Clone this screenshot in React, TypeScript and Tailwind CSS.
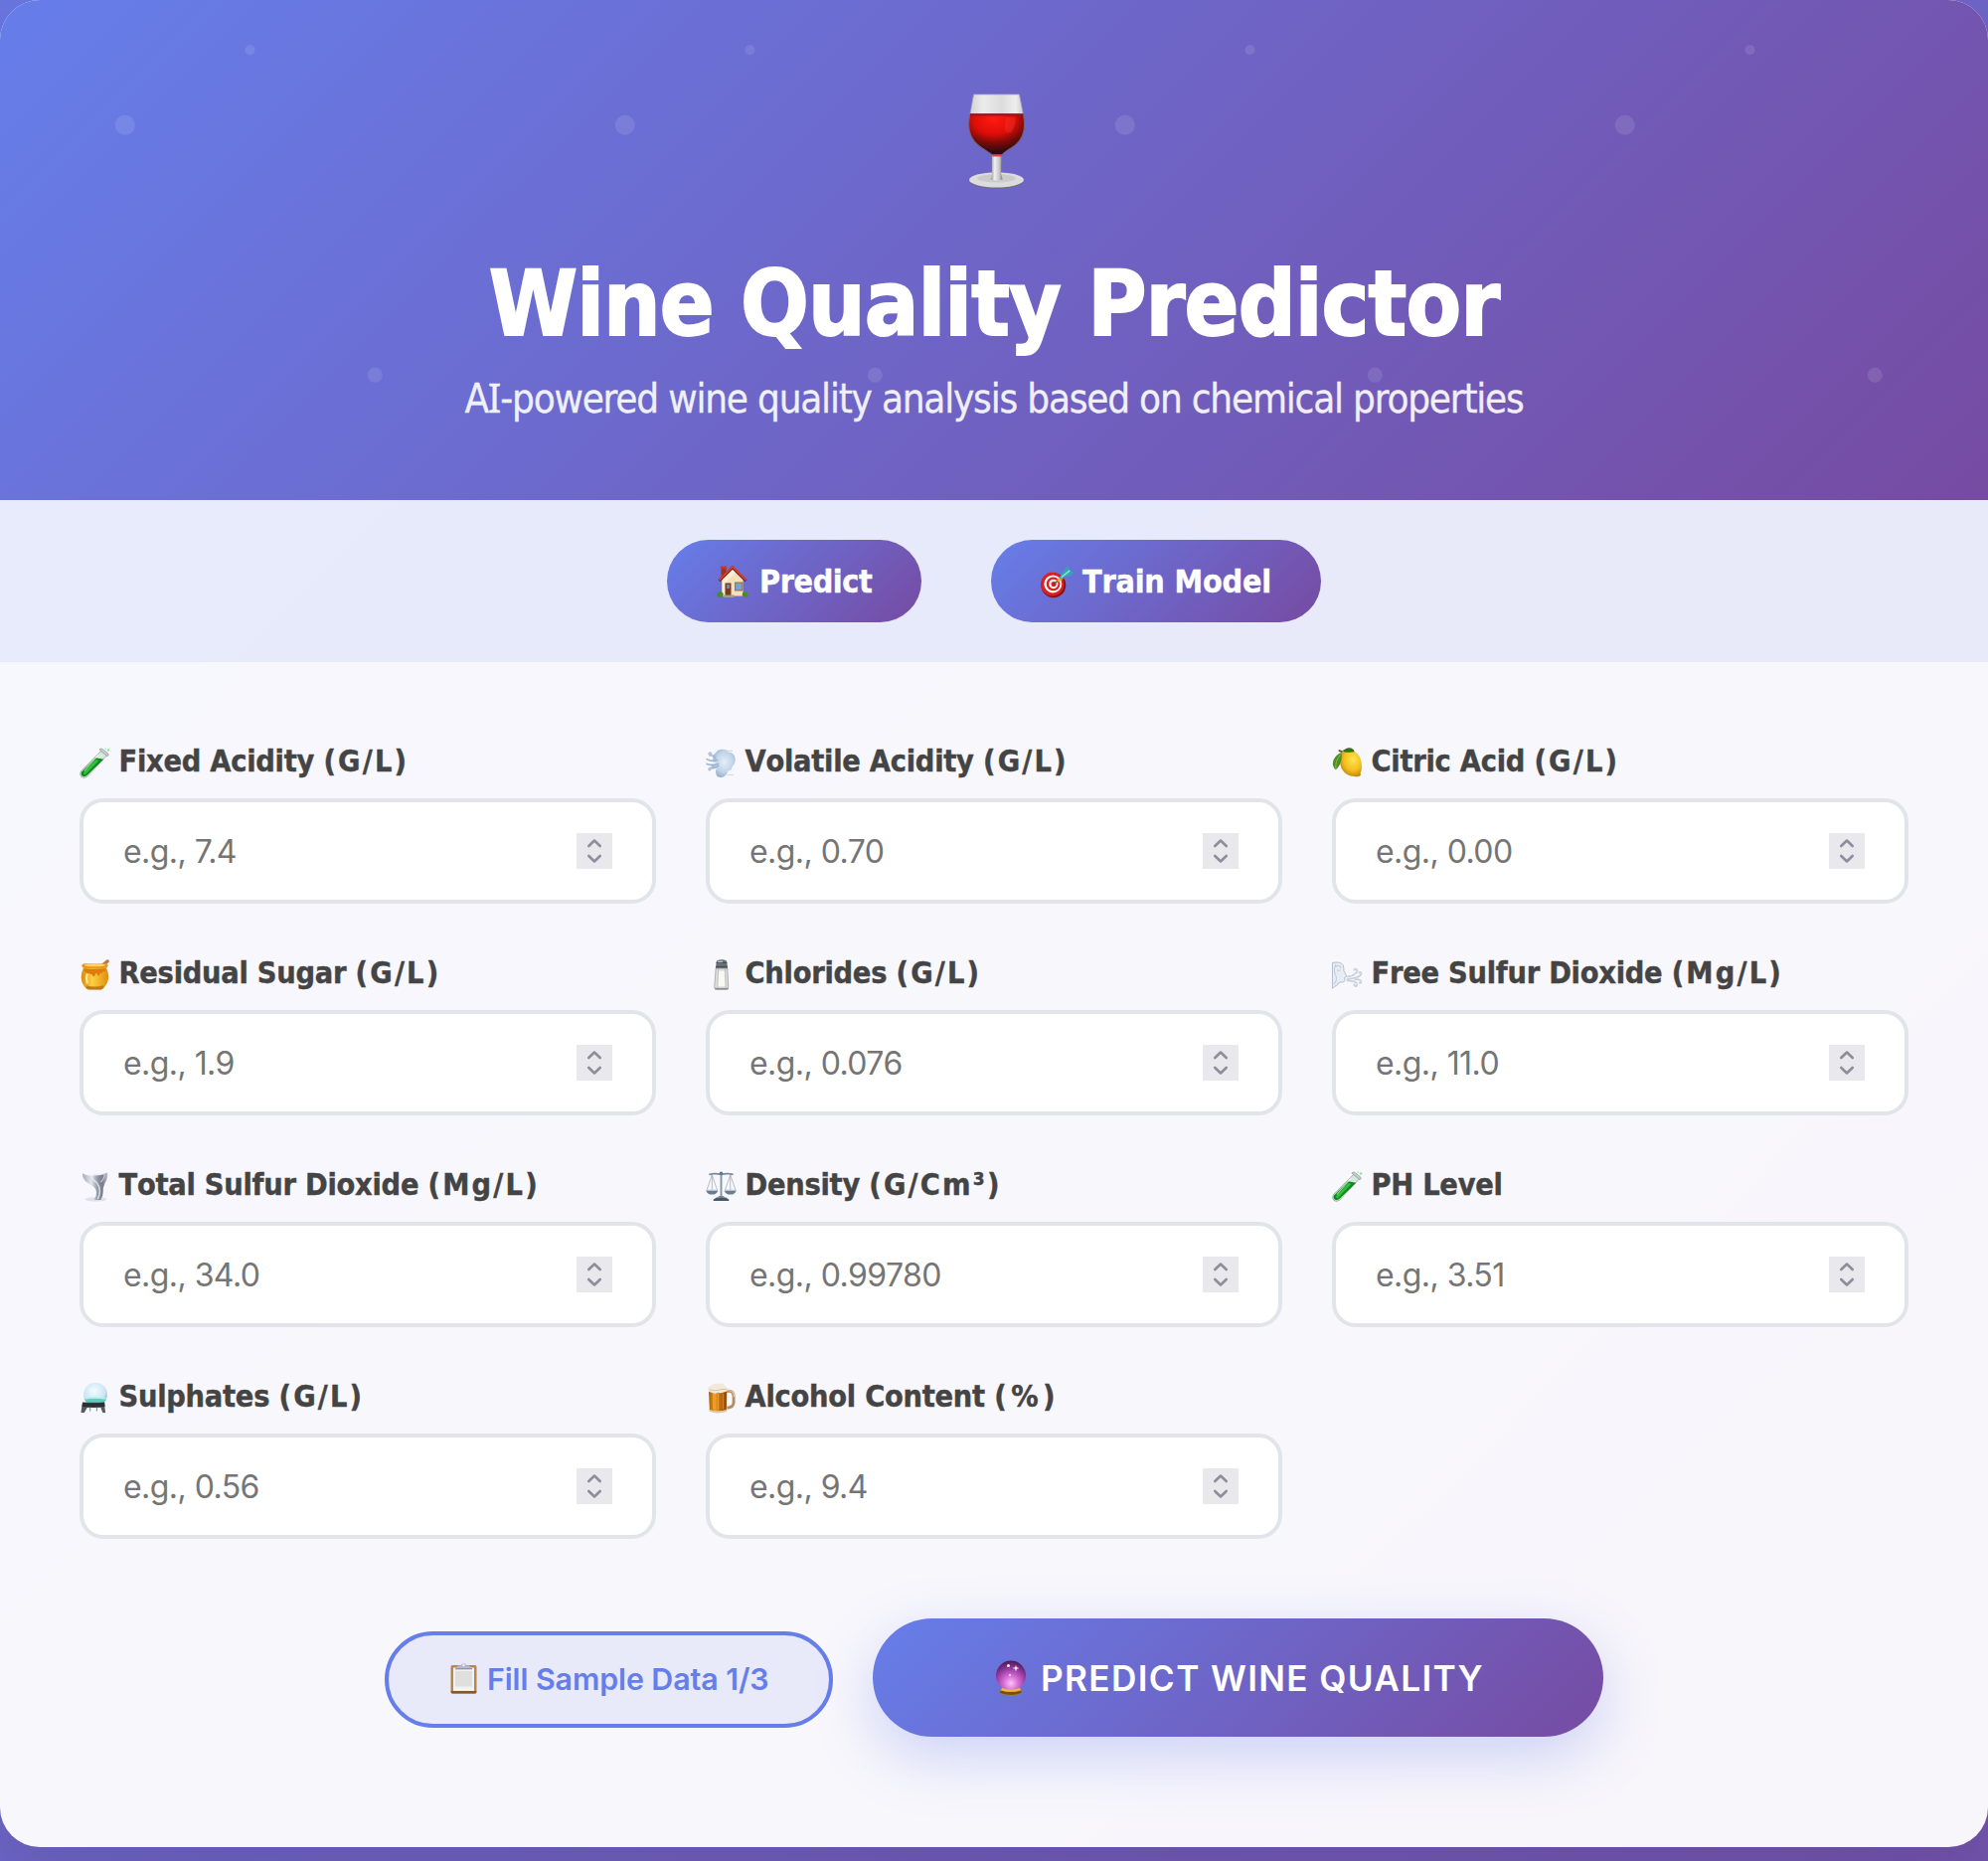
import type { ReactNode } from "react";

const Svg = ({ children, className }: { children: ReactNode; className: string }) => (
  <svg viewBox="0 0 32 32" className={className} aria-hidden="true">{children}</svg>
);

const WineGlass = () => (
  <svg viewBox="0 0 56 95" preserveAspectRatio="none" className="h-[96px] w-[57px]" aria-hidden="true">
    <defs>
      <linearGradient id="wgGlass" x1="0" x2="1" y1="0" y2="0">
        <stop offset="0" stopColor="#d2d2d4" />
        <stop offset=".25" stopColor="#ececec" />
        <stop offset=".6" stopColor="#dcdcde" />
        <stop offset=".85" stopColor="#eeeeee" />
        <stop offset="1" stopColor="#cfcfd2" />
      </linearGradient>
      <radialGradient id="wgWine" cx=".45" cy=".12" r=".82">
        <stop offset="0" stopColor="#ff1a12" />
        <stop offset=".45" stopColor="#dd0d08" />
        <stop offset=".72" stopColor="#7a0a08" />
        <stop offset="1" stopColor="#2d0a12" />
      </radialGradient>
      <linearGradient id="wgStem" x1="0" x2="1" y1="0" y2="0">
        <stop offset="0" stopColor="#8c8c90" />
        <stop offset=".35" stopColor="#f0f0f0" />
        <stop offset=".75" stopColor="#c4c4c6" />
        <stop offset="1" stopColor="#77777c" />
      </linearGradient>
    </defs>
    <ellipse cx="28" cy="87" rx="27" ry="7.500" fill="#6e6e70" />
    <ellipse cx="28" cy="86" rx="27" ry="7.500" fill="#dcdcdc" />
    <ellipse cx="28" cy="84.500" rx="19" ry="4" fill="#cbcbcc" />
    <path d="M23.500 60h9.500l-.5 20q1 4 1.500 5.500q-6 2-12 0q1.500-2 1.500-5z" fill="url(#wgStem)" />
    <path d="M5.500 1h45L54.500 21.500H1.800z" fill="url(#wgGlass)" stroke="#a9a4bd" strokeWidth=".8" />
    <path d="M1.800 21h52.700c2.500 13 .5 23-7 29.500C42 55 36 58 33.500 61H23.500C20 58 14 55 9 50.500C1 43-1 33 1.800 21z" fill="url(#wgWine)" stroke="#716378" strokeWidth="1" />
    <path d="M1.900 21h52.600" stroke="#7d1b1d" strokeWidth="1.800" />
    <path d="M37 24h10q0 10-5 15q-5 1-6-3z" fill="#ff5548" opacity=".22" />
    <path d="M24 62h9" stroke="#d5413d" strokeWidth="1.600" />
  </svg>
);

const House = () => (
  <Svg className="h-[32px] w-[32px]">
    <path d="M5.500 14L16 4l10.500 10v16.500h-21z" fill="#f3dfb9" />
    <path d="M5.500 14L16 4l3 3L8 18v12.500H5.500z" fill="#fbeed2" />
    <path d="M4.500 1h5v9l-5 4z" fill="#a52c1f" />
    <path d="M3.800.5h6.400v2.600H3.800z" fill="#c23c2a" />
    <path d="M2.500 15.200L16 1.800l13.500 13.400" fill="none" stroke="#6d1c16" strokeWidth="2.800" />
    <path d="M2.500 14.500L16 1l13.500 13.500" fill="none" stroke="#d6402e" strokeWidth="1.800" />
    <path d="M8.500 17.500h6V30h-6z" fill="#7a3b23" />
    <path d="M10 19h3v4h-3z" fill="#5c91bb" />
    <path d="M18 16.500h8.500v9H18z" fill="#a8733f" />
    <path d="M19.200 17.700h6v6.600h-6z" fill="#6ca9d9" />
    <path d="M7 29.500h10.500V32H7z" fill="#9e9a94" />
    <ellipse cx="3.500" cy="29" rx="3.200" ry="2.700" fill="#4a8c28" />
    <ellipse cx="28.700" cy="29" rx="3" ry="2.700" fill="#4a8c28" />
  </Svg>
);

const Dart = () => (
  <Svg className="h-[34px] w-[34px]">
    <ellipse cx="13" cy="19.500" rx="11.700" ry="11.800" fill="#8d0f12" />
    <ellipse cx="12" cy="18.500" rx="11" ry="11.200" fill="#d81f22" />
    <ellipse cx="12.500" cy="18.300" rx="8.400" ry="8.500" fill="#f6f3f0" />
    <ellipse cx="12.800" cy="18.300" rx="6.400" ry="6.500" fill="#d81f22" />
    <ellipse cx="13" cy="18.300" rx="4.400" ry="4.500" fill="#f6f3f0" />
    <circle cx="13.200" cy="18.300" r="2.400" fill="#d81f22" />
    <path d="M13.200 18.500l6-5" stroke="#4d4d50" strokeWidth="1.200" />
    <path d="M17 15.500l4.500-3.700" stroke="#e9b32f" strokeWidth="3" />
    <path d="M18.500 12l4-5.500 4-5.500 1.500 4.500 4 1.500-3.500 3.500-6 1-2.500 2.500z" fill="#2fa9ae" />
    <path d="M20.500 12l8-6.500" stroke="#8be6e2" strokeWidth="1.300" />
  </Svg>
);

const TestTube = () => (
  <Svg className="h-[31px] w-[31px]">
    <path d="M22.500 3.500l6 4.500L8 30q-3 2.500-6 .5q-2.500-2.500-.5-6z" fill="#d9e6de" stroke="#8f9f97" strokeWidth=".8" />
    <path d="M16.500 10.500l8.500 1.500L7.700 29q-2.500 2-5 .5q-2-2-.3-4.500z" fill="#0c8a1b" />
    <path d="M17 12.500l3.200.8L6 28q-2 .5-1.500-2z" fill="#2fc13a" />
    <path d="M20.500 2.200q1.500-2 3.500-.5l5.500 4.300q1.500 2-.5 3z" fill="#c4cdd0" stroke="#88959a" strokeWidth=".7" />
    <circle cx="30" cy="2.500" r="1.300" fill="#8fe69a" />
    <circle cx="27" cy="1.200" r=".8" fill="#8fe69a" />
    <path d="M20 7L5 24.500" stroke="#fff" strokeWidth="1.200" opacity=".6" />
  </Svg>
);

const Wind = () => (
  <Svg className="h-[31px] w-[31px]">
    <defs>
      <radialGradient id="puff" cx=".55" cy=".45" r=".6">
        <stop offset="0" stopColor="#e4eef8" />
        <stop offset=".6" stopColor="#c0d4e8" />
        <stop offset="1" stopColor="#8fa9c6" />
      </radialGradient>
    </defs>
    <path d="M10 6q3-5 9-4q4 0 4.500 3q6 0 7 6q1 5-3 9q-1 4-4 4q-2 6-7 7q-6 0-6-5q-1-3 2-5q-5 1-7-2q3-1 5-3q-4-1-3-5q-1-3 2.500-5z" fill="url(#puff)" />
    <path d="M1 12q5 3 11 1M1 17q6 2 12 0M5 21q5 1 8-2M4 8q5 0 6 3" fill="none" stroke="#9db5cd" strokeWidth="1.700" strokeLinecap="round" />
    <circle cx="4.500" cy="6.500" r="2" fill="#b1c5da" />
    <circle cx="4" cy="22.500" r="1.800" fill="#b1c5da" />
    <path d="M17 3.500h11M22 28.500h7" stroke="#cbd8e5" strokeWidth="1" />
  </Svg>
);

const Lemon = () => (
  <Svg className="h-[31px] w-[31px]">
    <defs>
      <radialGradient id="lemon" cx=".6" cy=".35" r=".7">
        <stop offset="0" stopColor="#ffe552" />
        <stop offset=".6" stopColor="#f4bd1c" />
        <stop offset="1" stopColor="#b87f0c" />
      </radialGradient>
    </defs>
    <path d="M11 5q8-5 15 1q5 5 5 13q0 5-1.500 7q1 3-1 3.700q-3 1-5.500.3q-8 0-13-8q-4-11 1-17z" fill="url(#lemon)" />
    <path d="M11 4q4-5 9-3.500q3 1 3.500 4q-6 1-12.500-.5z" fill="#356f17" />
    <path d="M10 5q-10 5-9 13q1 4 3 5q7-6 6-18z" fill="#4c8f22" />
    <path d="M9 7Q3 14 4 22" stroke="#8dbc50" strokeWidth="1" fill="none" />
    <path d="M7 3l4 1.500" stroke="#70502b" strokeWidth="1.800" />
  </Svg>
);

const Honey = () => (
  <Svg className="h-[31px] w-[31px]">
    <defs>
      <linearGradient id="honey" x1="0" x2="1" y1="0" y2="0">
        <stop offset="0" stopColor="#d48912" />
        <stop offset=".4" stopColor="#ffd042" />
        <stop offset="1" stopColor="#dd8d10" />
      </linearGradient>
    </defs>
    <path d="M23 7l6-5" stroke="#bd793a" strokeWidth="3.500" strokeLinecap="round" />
    <path d="M4 9h24q5 11-2 20q-1 2-3.500 2.500h-13q-3-.5-4.500-3Q-1 20 4 9z" fill="url(#honey)" />
    <path d="M7 27q9 3 18 0v2.500q-1.500 2-3 2h-12q-3-.5-3-2z" fill="#bd7a18" />
    <path d="M2.500 6.500q0-2 3-2h21q3 0 3 2t-2.500 3h-22q-2.500-1-2.500-3z" fill="#e9971a" />
    <ellipse cx="16" cy="6" rx="11" ry="1.600" fill="#ffd36a" />
    <path d="M4.500 10h23q-1 4-3 2.500q-1 3-3 1.500q-1 5-3 1.500q-1-2-2 0q-2 5-3.500 0q-1.500 1-2.500-1q-2 1-3-1q-2 1-3-3.500z" fill="#e27a09" />
    <path d="M8 15q-1.500 5 0 10" stroke="#fff0ad" strokeWidth="2" fill="none" />
  </Svg>
);

const Salt = () => (
  <Svg className="h-[31px] w-[31px]">
    <path d="M10.500 9h12l1 20q0 2.500-2.500 2.500h-9.500Q9 31.500 9 29z" fill="#dededb" stroke="#a0a09f" strokeWidth=".8" />
    <path d="M13 12h7l.8 16h-8.600z" fill="#f8f8f5" />
    <path d="M13 10l-.8 20M20 10l.8 20" stroke="#bdbdbb" strokeWidth="1" />
    <path d="M11 3q0-2.800 5.500-2.800T22 3l.8 6.500H10.200z" fill="#6b7279" />
    <path d="M11 3.500h11M10.500 7.500h12" stroke="#3d444b" strokeWidth="1" />
    <path d="M12.500 2.500h5" stroke="#bcc4ca" strokeWidth="1.500" />
    <path d="M9.500 30.500h14" stroke="#8f8f8f" strokeWidth="1.500" />
  </Svg>
);

const WindFace = () => (
  <Svg className="h-[31px] w-[31px]">
    <path d="M.5 3.500Q9 2 11.500 6q1 3 .8 6l2.700 5q.5 1.500-2 1.800l.5 3q-.5 2.500-5 2q-2 0-3 3q-2 .5-5 3.500z" fill="#e8edf5" stroke="#b4bccb" strokeWidth="1" />
    <path d="M3 8q5-3 6.500 1M5 11q2 1.500 4 0M4 5q-3 7 0 12q2 4-2 9" fill="none" stroke="#c3cbd8" strokeWidth="1.100" />
    <path d="M16 18q5 0 8-3q3-2 2-4q-2-2-3 0M16 20.500q7-1 10-2q4-1 4.500-4q-1-2-2.500-.5M16 22q6 0 9 2q2 3 0 4q-2 0-2-2M24 21q5-1 6.500 2q-.5 2.500-2 1.500" fill="none" stroke="#c8d0dc" strokeWidth="1.700" strokeLinecap="round" />
  </Svg>
);

const Tornado = () => (
  <Svg className="h-[31px] w-[31px]">
    <defs>
      <linearGradient id="twister" x1="0" x2="1" y1="0" y2="0">
        <stop offset="0" stopColor="#a5a9b8" />
        <stop offset=".35" stopColor="#e3e5ec" />
        <stop offset=".6" stopColor="#9297a6" />
        <stop offset=".8" stopColor="#777c8d" />
        <stop offset="1" stopColor="#c5c8d3" />
      </linearGradient>
    </defs>
    <ellipse cx="17" cy="29.300" rx="11" ry="2.300" fill="#dfe1ea" />
    <path d="M3 2q3 3 9 2.500q8 1 17-3q1 6-2.500 11q-2.500 5-2 9.500q0 4-2.500 8h-7q3-4 2.500-8q0-5-6.500-8Q3 10 3 2z" fill="url(#twister)" />
    <path d="M13 5q0 4 5 7q3 4 3 9q0 4-2 8" fill="none" stroke="#eceef3" strokeWidth="1.600" opacity=".8" />
    <path d="M15 3.500q7 1 11-1q0 5-4 9" fill="none" stroke="#e2e4ec" strokeWidth="1.200" opacity=".7" />
  </Svg>
);

const Scales = () => (
  <Svg className="h-[31px] w-[31px]">
    <path d="M15 2.500h2V27h-2z" fill="#8397a9" />
    <path d="M3.500 3.500q6-1.500 12.500 0q6.500-1.500 12.500 0" fill="none" stroke="#7b8c9c" strokeWidth="1.700" />
    <circle cx="16" cy="2.200" r="1.800" fill="#60758a" />
    <path d="M6.500 4L1 20M6.500 4L12 20M25.500 4L20 20M25.500 4L31 20M6.500 4v16M25.500 4v16" stroke="#a4adb5" strokeWidth=".8" />
    <path d="M.3 20h12.400q-1 4.300-6.200 4.300T.3 20zM19.300 20h12.400q-1 4.300-6.200 4.300T19.300 20z" fill="#687d92" />
    <path d="M1 20h11M20 20h11" stroke="#b7c1ca" strokeWidth="1.200" />
    <path d="M12 27q4-2.500 8 0l4 2.500v1.500H8v-1.500z" fill="#45576a" />
    <path d="M11 27.500q5-1.500 10 0" stroke="#9eabb6" fill="none" />
  </Svg>
);

const SnowGlobe = () => (
  <Svg className="h-[31px] w-[31px]">
    <defs>
      <radialGradient id="globe" cx=".45" cy=".35" r=".65">
        <stop offset="0" stopColor="#f6fcff" />
        <stop offset=".7" stopColor="#cbe6f4" />
        <stop offset="1" stopColor="#89b5cf" />
      </radialGradient>
    </defs>
    <circle cx="16.500" cy="12" r="12.300" fill="url(#globe)" />
    <path d="M5 16.500q11-1 23 0q-1.500 4-5 5h-13q-4-1-5-5z" fill="#63cdbd" />
    <path d="M5.500 16.500q10-2 22 0" stroke="#b6efe6" strokeWidth="1.500" fill="none" />
    <path d="M3 20.500h22.500l1.500 10.500h-3L22 25.500H8L5 31H1.500z" fill="#555b61" />
    <path d="M3.500 20q11 2 22.500 0l.5 4.500q-12 2-24 0z" fill="#2b3034" />
    <path d="M11 25.500v4M18 25.500v4" stroke="#8d9397" strokeWidth="1.200" />
  </Svg>
);

const Beer = () => (
  <Svg className="h-[31px] w-[31px]">
    <defs>
      <linearGradient id="ale" x1="0" x2="1" y1="0" y2="0">
        <stop offset="0" stopColor="#a95708" />
        <stop offset=".35" stopColor="#f0a021" />
        <stop offset=".6" stopColor="#c66d0d" />
        <stop offset="1" stopColor="#8d4709" />
      </linearGradient>
    </defs>
    <path d="M20 8.500h4q5 0 5 6v6q0 5-7 5.500" fill="none" stroke="#b78e62" strokeWidth="3" />
    <path d="M20 8h4q5.500 0 5.500 6.500" fill="none" stroke="#e3cdb2" strokeWidth="1.200" />
    <path d="M3 6h19l-.5 23q-9 3.500-17.500 0z" fill="url(#ale)" />
    <path d="M8 11v16M13 11v17M18 11v16" stroke="#ffd36a" strokeWidth="1.200" opacity=".35" />
    <path d="M3.500 27.500q9 3.500 18.500 0v2.300q-9 3.300-18.500 0z" fill="#d9c9b1" />
    <path d="M2 7q0-3 3-4q3-3.500 8-2.300q5-1 7 2.300q3 1 3 4q-1 3-4 2.500q-3 2-6.500.5q-3 2-6 0q-3 .5-4.500-3z" fill="#f3e9da" />
    <path d="M4 7q5 2 9 .5t9-.5" fill="none" stroke="#d4bfa4" />
  </Svg>
);

const Clipboard = () => (
  <svg viewBox="0 0 27 31" className="h-[31px] w-[27px]" aria-hidden="true">
    <rect x=".5" y="2" width="26" height="28.500" rx="1.800" fill="#b98847" />
    <path d="M.7 28h25.600v1.500q0 1-1.500 1h-22.600q-1.500 0-1.500-1z" fill="#84582a" />
    <path d="M3 4.500h21V27H3z" fill="#f2f2f1" />
    <path d="M5 8h17v15.500H5z" fill="#dfdfde" />
    <path d="M3 27.200h21" stroke="#fff" strokeWidth="1.200" />
    <path d="M8 2.500h2.500q.5-2.300 3-2.300t3 2.300H19l3 3.500H5z" fill="#b8bcc2" />
    <circle cx="13.500" cy="2" r="1.200" fill="#e9ecef" />
    <path d="M5 5.800h17" stroke="#82878d" strokeWidth="1" />
  </svg>
);

const CrystalBall = () => (
  <svg viewBox="0 0 32 36" className="h-[36px] w-[32px]" aria-hidden="true">
    <defs>
      <radialGradient id="crystal" cx=".5" cy=".76" r=".78">
        <stop offset="0" stopColor="#fbc4f8" />
        <stop offset=".3" stopColor="#d970d8" />
        <stop offset=".65" stopColor="#93389d" />
        <stop offset="1" stopColor="#431650" />
      </radialGradient>
    </defs>
    <path d="M7 27h18l2.500 6.500q-11 3.500-23 0z" fill="#c08a1c" />
    <path d="M6 30.500q10 3 20 0l1 2.500q-11 4-22.500 0z" fill="#7d4e0c" />
    <circle cx="16" cy="15.500" r="15" fill="url(#crystal)" />
    <path d="M7 28q9 3.500 18 0l.8 2.200q-9.800 3.300-19.700 0z" fill="#eabb43" />
    <path d="M21 5l.8 2.300 2.700.7-2.700.8-.8 2.700-.8-2.700-2.700-.8 2.700-.7z" fill="#fff" />
    <ellipse cx="13.500" cy="5.500" rx="1.500" ry="1.500" fill="#fff" opacity=".95" />
    <circle cx="15" cy="15" r="1.100" fill="#fff" opacity=".8" />
  </svg>
);

type Field = { icon: ReactNode; name: string; unit?: string; hint: string };

const fields: Field[] = [
  { icon: <TestTube />, name: "Fixed Acidity", unit: "(G/L)", hint: "e.g., 7.4" },
  { icon: <Wind />, name: "Volatile Acidity", unit: "(G/L)", hint: "e.g., 0.70" },
  { icon: <Lemon />, name: "Citric Acid", unit: "(G/L)", hint: "e.g., 0.00" },
  { icon: <Honey />, name: "Residual Sugar", unit: "(G/L)", hint: "e.g., 1.9" },
  { icon: <Salt />, name: "Chlorides", unit: "(G/L)", hint: "e.g., 0.076" },
  { icon: <WindFace />, name: "Free Sulfur Dioxide", unit: "(Mg/L)", hint: "e.g., 11.0" },
  { icon: <Tornado />, name: "Total Sulfur Dioxide", unit: "(Mg/L)", hint: "e.g., 34.0" },
  { icon: <Scales />, name: "Density", unit: "(G/Cm³)", hint: "e.g., 0.99780" },
  { icon: <TestTube />, name: "PH Level", hint: "e.g., 3.51" },
  { icon: <SnowGlobe />, name: "Sulphates", unit: "(G/L)", hint: "e.g., 0.56" },
  { icon: <Beer />, name: "Alcohol Content", unit: "(%)", hint: "e.g., 9.4" },
];

const Spinner = () => (
  <span className="flex size-9 flex-none items-center justify-center bg-[#e9e8ed]">
    <svg viewBox="0 0 36 36" className="size-9" fill="none" stroke="#8f8d9c" strokeWidth="2.600" strokeLinecap="round" strokeLinejoin="round" aria-hidden="true">
      <path d="M12.300 13L18 7.500l5.700 5.500M12.300 23L18 28.500l5.700-5.500" />
    </svg>
  </span>
);

const NumberField = ({ icon, name, unit, hint }: Field) => (
  <div className="flex flex-col">
    <div className="mb-[18px] flex h-9 items-center">
      <span className="w-[39.500px] flex-none">{icon}</span>
      <span className="-mt-0.5 text-[30.4px] leading-9 font-bold tracking-[-0.25px] whitespace-nowrap text-[#444] [-webkit-text-stroke:0.4px_#444] [font-kerning:none]">
        {name}{" "}
        {unit && <span className={unit === "(%)" ? "tracking-[4.5px]" : "tracking-[2.2px]"}>{unit}</span>}
      </span>
    </div>
    <div className="flex h-[106px] items-center justify-between rounded-[24px] border-4 border-[#e1e5e9] bg-white px-10 font-['Inter',sans-serif]">
      <span className="mt-0.5 text-[32px] leading-[38px] tracking-[-0.55px] text-[#757575]">{hint}</span>
      <Spinner />
    </div>
  </div>
);

const Bubbles = () => (
  <svg className="absolute inset-0 h-full w-full" aria-hidden="true">
    <defs>
      <pattern id="bubbles" width="503" height="503" patternUnits="userSpaceOnUse">
        <g fill="#fff" fillOpacity=".1">
          <circle cx="125.750" cy="125.750" r="10" />
          <circle cx="251.500" cy="50.300" r="5" />
          <circle cx="377.250" cy="377.250" r="7.500" />
        </g>
      </pattern>
    </defs>
    <rect width="100%" height="100%" fill="url(#bubbles)" />
  </svg>
);

export default function App() {
  return (
    <div className="h-[1872px] w-[2000px] overflow-hidden bg-[linear-gradient(135deg,#667eea_-25%,#764ba2_125%)] font-['DejaVu_Sans_Condensed','DejaVu_Sans',sans-serif]">
      <main className="flex h-[1858px] flex-col overflow-hidden rounded-[40px] bg-white/95 shadow-[0_40px_80px_rgba(0,0,0,0.1)]">
        <header className="relative h-[503px] bg-[linear-gradient(135deg,#667eea_0%,#764ba2_100%)]">
          <Bubbles />
          <div className="relative flex flex-col items-center pt-[94px] text-white">
            <div className="pl-1"><WineGlass /></div>
            <h1 className="mt-[62px] text-[90px] leading-[108px] font-bold tracking-[-0.9px] whitespace-nowrap [-webkit-text-stroke:1.8px_#fff]">Wine Quality Predictor</h1>
            <p className="mt-[10px] text-[40px] leading-[60px] tracking-[-1.2px] whitespace-nowrap opacity-90 [-webkit-text-stroke:0.3px_#fff]">
              A<span className="font-['Noto_Sans',sans-serif]">I</span>-powered wine quality analysis based on chemical properties
            </p>
          </div>
        </header>

        <nav className="flex h-[163px] justify-center gap-[70px] bg-[#667eea]/10 pt-10 text-[32px] leading-[40px] font-bold text-white [-webkit-text-stroke:0.4px_#fff]">
          <a className="flex h-[83px] w-[256px] items-center rounded-full bg-[linear-gradient(135deg,#667eea_0%,#764ba2_100%)] pl-[50px] whitespace-nowrap">
            <span className="w-[43px] flex-none"><House /></span>
            <span className="tracking-[-0.4px]">Predict</span>
          </a>
          <a className="flex h-[83px] w-[332px] items-center rounded-full bg-[linear-gradient(135deg,#667eea_0%,#764ba2_100%)] pl-[49px] whitespace-nowrap">
            <span className="w-[43px] flex-none"><Dart /></span>
            <span className="[font-kerning:none] tracking-[-0.2px]">Train Model</span>
          </a>
        </nav>

        <section className="px-20 pt-[83px]">
          <div className="grid grid-cols-3 gap-x-[50px] gap-y-[53px]">
            {fields.map((field) => (
              <NumberField key={field.name} {...field} />
            ))}
          </div>

          <div className="mt-20 flex items-center justify-center gap-10 font-['Inter',sans-serif] font-semibold">
            <button className="mt-1 flex h-[97px] w-[451px] items-center rounded-full border-4 border-[#667eea] bg-[#667eea]/10 pb-0.5 pl-[62px] text-[30.4px] leading-9 whitespace-nowrap text-[#667eea]">
              <span className="w-[37px] flex-none"><Clipboard /></span>
              <span className="tracking-[-0.1px]">Fill Sample Data 1/3</span>
            </button>
            <button className="flex h-[119px] w-[735px] items-center rounded-full bg-[linear-gradient(135deg,#667eea_0%,#764ba2_100%)] pl-[123px] text-[35.2px] leading-[42px] whitespace-nowrap text-white shadow-[0_20px_60px_rgba(102,126,234,0.3)]">
              <span className="w-[46px] flex-none"><CrystalBall /></span>
              <span className="tracking-[1.35px]">PREDICT WINE QUALITY</span>
            </button>
          </div>
        </section>
      </main>
    </div>
  );
}
